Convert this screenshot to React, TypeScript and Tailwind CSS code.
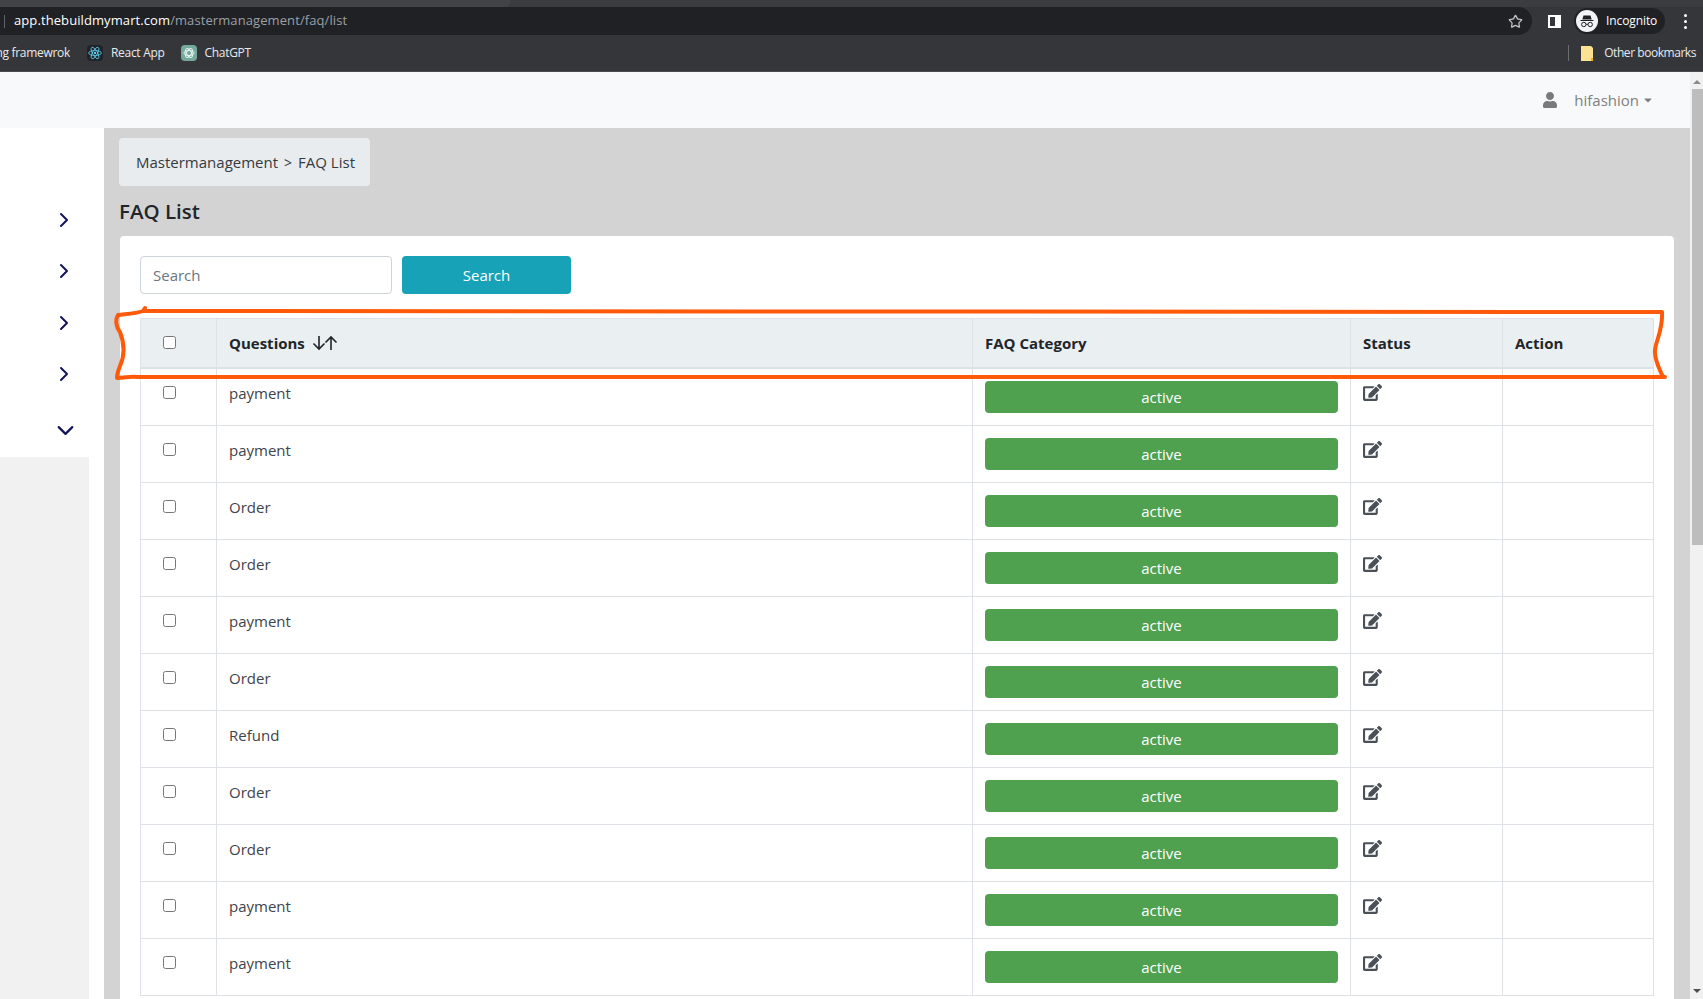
import { ChevronDown, ChevronRight, Star } from "lucide-react";
import { FaEdit, FaUser, FaCaretDown } from "react-icons/fa";

const rows = [
  "payment",
  "payment",
  "Order",
  "Order",
  "payment",
  "Order",
  "Refund",
  "Order",
  "Order",
  "payment",
  "payment",
];

function BrowserBar() {
  return (
    <div className="shrink-0 bg-[#35363a] text-white font-['Open_Sans',sans-serif]">
      <div className="h-[7px] bg-[#3b3c40]">
        <div className="w-[510px] h-full bg-[#424347] rounded-br-sm" />
      </div>
      <div className="h-[28px] flex items-center">
        <div className="w-[1532px] h-full bg-[#202124] rounded-r-full flex items-center pl-[4px]">
          <div className="w-px h-[13px] bg-[#5f6368]" />
          <span className="ml-[9px] text-[13px] tracking-[0.09px]">
            app.thebuildmymart.com
            <span className="text-[#9aa0a6]">/mastermanagement/faq/list</span>
          </span>
          <Star size={15} className="ml-auto mr-[9px] text-[#c4c7c5]" />
        </div>
        <div className="ml-[16px] w-[13px] h-[13px] border-2 border-white border-r-[6px] bg-transparent" />
        <div className="ml-[13px] w-[91px] h-[26px] bg-[#202124] rounded-full flex items-center pl-[2px]">
          <svg width="22" height="22" viewBox="0 0 22 22">
            <circle cx="11" cy="11" r="11" fill="#f1f3f4" />
            <path d="M7.5 5.5h7l1.2 4h-9.4z M4.5 10h13v1h-13z" fill="#202124" />
            <circle cx="7.8" cy="14.5" r="2.2" fill="none" stroke="#202124" strokeWidth="1" />
            <circle cx="14.2" cy="14.5" r="2.2" fill="none" stroke="#202124" strokeWidth="1" />
            <path d="M10 14.3h2" stroke="#202124" strokeWidth="1" />
          </svg>
          <span className="ml-[8px] text-[12px] tracking-[-0.1px]">Incognito</span>
        </div>
        <div className="ml-[19px] flex flex-col gap-[3px]">
          <div className="w-[3px] h-[3px] rounded-full bg-white" />
          <div className="w-[3px] h-[3px] rounded-full bg-white" />
          <div className="w-[3px] h-[3px] rounded-full bg-white" />
        </div>
      </div>
      <div className="h-[36px] flex items-center text-[12px] tracking-[-0.3px] text-[#e8eaed] border-b border-[#4a4b4f] box-content">
        <span className="w-[70px] overflow-hidden whitespace-nowrap flex justify-end">
          ng framewrok
        </span>
        <div className="ml-[17px] w-[16px] h-[16px] rounded-sm bg-[#20232a] flex items-center justify-center">
          <svg width="14" height="14" viewBox="-12 -12 24 24" fill="none" stroke="#61dafb" strokeWidth="1.3">
            <circle r="2" fill="#61dafb" stroke="none" />
            <ellipse rx="11" ry="4.2" />
            <ellipse rx="11" ry="4.2" transform="rotate(60)" />
            <ellipse rx="11" ry="4.2" transform="rotate(120)" />
          </svg>
        </div>
        <span className="ml-[8px]">React App</span>
        <div className="ml-[16px] w-[16px] h-[16px] rounded-sm bg-[#74aa9c] flex items-center justify-center">
          <svg width="12" height="12" viewBox="-12 -12 24 24" fill="none" stroke="#e6f2ef" strokeWidth="2">
            <ellipse rx="10" ry="5" />
            <ellipse rx="10" ry="5" transform="rotate(60)" />
            <ellipse rx="10" ry="5" transform="rotate(120)" />
          </svg>
        </div>
        <span className="ml-[8px]">ChatGPT</span>
        <div className="ml-auto w-px h-[16px] bg-[#6b6d71]" />
        <svg className="ml-[12px]" width="12" height="15" viewBox="0 0 12 15">
          <path d="M0 0h10l2 2v13H0z" fill="#fde293" />
          <path d="M10 12h2v3h-2z" fill="#f9ab00" />
        </svg>
        <span className="ml-[11px] mr-[7px] tracking-[-0.45px]">Other bookmarks</span>
      </div>
    </div>
  );
}

function Sidebar() {
  return (
    <div className="w-[104px] shrink-0 bg-white flex flex-col">
      <div className="w-[89px] h-[329px] pt-[66px] text-[#14145a]">
        {[0, 1, 2, 3].map((i) => (
          <div key={i} className="h-[51.5px] pl-[52px] flex items-center">
            <ChevronRight size={24} strokeWidth={2} />
          </div>
        ))}
        <div className="h-[60px] pl-[52px] flex items-center">
          <ChevronDown size={27} strokeWidth={2} />
        </div>
      </div>
      <div className="w-[89px] flex-1 bg-[#f1f1f1]" />
    </div>
  );
}

function FaqTable() {
  return (
    <table className="w-[1513px] table-fixed border-collapse text-[15px] text-[#212529]">
      <colgroup>
        <col className="w-[76px]" />
        <col className="w-[756px]" />
        <col className="w-[378px]" />
        <col className="w-[152px]" />
        <col className="w-[151px]" />
      </colgroup>
      <thead className="bg-[#eaeff2]">
        <tr>
          <th className="border border-b-2 border-[#dee2e6] p-3 text-left leading-6">
            <input type="checkbox" className="block ml-[10px] -mt-[2px] w-[13px] h-[13px]" />
          </th>
          <th className="border border-b-2 border-[#dee2e6] p-3 text-left leading-6 font-bold">
            <span className="flex items-center">
              Questions
              <svg className="ml-[7px]" width="26" height="16" viewBox="0 0 26 16" fill="none" stroke="#212529" strokeWidth="1.6">
                <path d="M7 1v13M1.5 8.5 7 14l5.5-5.5" />
                <path d="M19 15V2M13.5 7.5 19 2l5.5 5.5" />
              </svg>
            </span>
          </th>
          <th className="border border-b-2 border-[#dee2e6] p-3 text-left leading-6 font-bold">FAQ Category</th>
          <th className="border border-b-2 border-[#dee2e6] p-3 text-left leading-6 font-bold">Status</th>
          <th className="border border-b-2 border-[#dee2e6] p-3 text-left leading-6 font-bold">Action</th>
        </tr>
      </thead>
      <tbody>
        {rows.map((q, i) => (
          <tr key={i}>
            <td className="border border-[#dee2e6] p-3 align-top leading-6">
              <input type="checkbox" className="block ml-[10px] mt-[5px] w-[13px] h-[13px]" />
            </td>
            <td className="border border-[#dee2e6] p-3 align-top leading-6 text-[#3f4449]">{q}</td>
            <td className="border border-[#dee2e6] p-3 align-top">
              <button className="w-full h-[32px] rounded bg-[#50a14f] text-white leading-6">active</button>
            </td>
            <td className="border border-[#dee2e6] p-3 align-top">
              <FaEdit className="text-[19px] mt-[2px] text-[#495057]" />
            </td>
            <td className="border border-[#dee2e6] p-3" />
          </tr>
        ))}
      </tbody>
    </table>
  );
}

function Annotation() {
  return (
    <svg className="absolute left-0 top-0 pointer-events-none" width="1703" height="999" fill="none">
      <path
        d="M145 308 L143 311 C135 314 125 314 118 315 C115 320 116 327 120 332 C125 345 125 355 120 366 C118 371 117 375 117 378 C125 378 130 376 137 377 L1665 377 M1663 377 C1660 370 1654 360 1655 350 C1656 340 1663 330 1662 312 L143 311"
        stroke="#ff5a0a"
        strokeWidth="4"
        strokeLinecap="round"
        strokeLinejoin="round"
      />
    </svg>
  );
}

export default function App() {
  return (
    <div className="relative h-[999px] w-[1703px] overflow-hidden flex flex-col font-['Open_Sans',sans-serif]">
      <BrowserBar />
      <div className="flex-1 flex min-h-0">
        <div className="flex-1 flex flex-col min-w-0">
          <div className="h-[56px] shrink-0 bg-[#f8f9fa] flex items-center justify-end pr-[36px] text-[15px] text-[#808080]">
            <FaUser className="text-[16px] text-[#7a7a7a]" />
            <span className="ml-[16px]">hifashion</span>
            <FaCaretDown className="ml-[3px] text-[12px]" />
          </div>
          <div className="flex-1 flex min-h-0">
            <Sidebar />
            <div className="flex-1 bg-[#d3d3d3] pt-[10px] pl-[15px] pr-[16px] min-w-0">
              <div className="w-[251px] h-[48px] rounded bg-[#e9ecef] flex items-center pl-[17px] text-[15px] text-[#343a40]">
                Mastermanagement
                <span className="mx-[6px] text-[14px]">&gt;</span>
                FAQ List
              </div>
              <h4 className="mt-[9px] h-[41px] text-[20.5px] leading-[32px] font-semibold text-[#212529]">FAQ List</h4>
              <div className="ml-[1px] bg-white rounded-sm h-[800px] pt-[20px] px-[20px]">
                <div className="flex gap-[10px]">
                  <input
                    placeholder="Search"
                    className="w-[252px] h-[38px] px-3 border border-[#ced4da] rounded text-[15px] placeholder:text-[#6c757d] bg-white"
                  />
                  <button className="w-[169px] h-[38px] rounded bg-[#17a2b8] text-white text-[15px]">Search</button>
                </div>
                <div className="mt-[24px]">
                  <FaqTable />
                </div>
              </div>
            </div>
          </div>
        </div>
        <div className="w-[13px] shrink-0 bg-[#f1f1f1] flex flex-col items-end">
          <div className="h-[17px] w-full flex items-center justify-center pt-[2px]">
            <div className="border-x-[4px] border-x-transparent border-b-[4px] border-b-[#8a8a8a]" />
          </div>
          <div className="w-[11px] h-[456px] bg-[#bdbdbd]" />
          <div className="mt-auto h-[16px] w-full flex items-center justify-center">
            <div className="border-x-[4px] border-x-transparent border-t-[4px] border-t-[#505050]" />
          </div>
        </div>
      </div>
      <Annotation />
    </div>
  );
}
